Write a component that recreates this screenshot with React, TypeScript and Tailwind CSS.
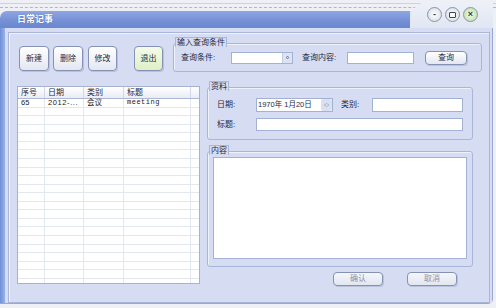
import React from 'react'
import clsx from 'clsx'

const font = { fontFamily: '"Liberation Sans", "Noto Sans CJK SC", sans-serif' }

function Btn({ label, className }: { label: string; className?: string }) {
  return (
    <button
      className={clsx(
        'flex items-center justify-center rounded-[4px] border border-[#8592b4] text-[8px] leading-none text-[#1e2a44] shadow-[1px_1px_0_#b9c2da]',
        className,
      )}
    >
      {label}
    </button>
  )
}

function Group({ legend, className, children }: { legend: string; className?: string; children?: React.ReactNode }) {
  return (
    <div className={clsx('relative rounded-[3px] border border-[#a9b6d7] shadow-[inset_1px_1px_0_#eef2fb]', className)}>
      <span className="absolute -top-[7px] left-[1px] border-x border-t border-[#a9b6d7] bg-[#d6ddf2] px-[1px] text-[8px] leading-[9px] text-[#1e2a44]">
        {legend}
      </span>
      {children}
    </div>
  )
}

function Input({ className }: { className?: string }) {
  return <div className={clsx('border border-[#a3b1d2] bg-white', className)} />
}

const cols = ['w-[27px]', 'w-[39px]', 'w-[40px]', 'w-[67px]', 'flex-1']

function List() {
  const rows = Array.from({ length: 22 })
  return (
    <div className="ml-[8px] mt-[6px] flex h-[198px] w-[183px] flex-col overflow-hidden border border-[#a6b2d0] bg-white">
      <div className="flex h-[12px] shrink-0 border-b border-[#aeb8d4] bg-linear-to-b from-white to-[#e9ecf5] text-[8px] leading-none text-[#1e2a44]">
        {['序号', '日期', '类别', '标题', ''].map((h, i) => (
          <div key={i} className={clsx(cols[i], 'flex items-center pl-[3px]', i < 4 && 'border-r border-[#d2d8e8]')}>
            {h}
          </div>
        ))}
      </div>
      {rows.map((_, r) => (
        <div key={r} className="flex h-[8.57px] shrink-0 border-b border-[#e3e7f0] text-[7.5px] leading-none text-[#222]">
          {(r === 0 ? ['65', '2012-...', '会议', 'meeting', ''] : ['', '', '', '', '']).map((c, i) => (
            <div key={i} className={clsx(cols[i], 'flex items-center pl-[3px]', i < 4 && 'border-r border-[#e3e7f0]', i === 3 && 'font-mono text-[7px] tracking-[0.5px]', i === 1 && 'tracking-[0.6px]')}>
              {c}
            </div>
          ))}
        </div>
      ))}
    </div>
  )
}

function Circle({ children, green }: { children: React.ReactNode; green?: boolean }) {
  return (
    <div
      className={clsx(
        'flex h-[15px] w-[15px] items-center justify-center rounded-full border border-[#8c93a6] text-[9px] font-bold leading-none text-[#333a4c]',
        green ? 'bg-radial from-[#f2fbe8] to-[#b6dca0]' : 'bg-radial from-white to-[#d4d8e2]',
      )}
    >
      {children}
    </div>
  )
}

export default function App() {
  return (
    <div className="relative h-[308px] w-[496px] overflow-hidden bg-[#eef0f5]" style={font}>
      {/* background window behind */}
      <div className="h-[11px]">
        <div className="h-[3px]" />
        <div className="h-px bg-[#cdd2de]" />
        <div className="mt-[3px] h-px border-t border-dashed border-[#8c919c] opacity-60" />
      </div>

      {/* window */}
      <div className="flex h-[293px] w-[493px] flex-col rounded-br-[5px] border-r border-b border-[#99a8cc]">
        <div className="flex h-[17px] shrink-0">
          <div className="flex flex-1 items-center rounded-tl-[7px] bg-linear-to-b from-[#8ea7e2] via-[#7892d6] to-[#6a86cf] pl-[17px] text-[9px] font-bold text-white [text-shadow:0_0_1px_#3a55a0]">
            日常记事
          </div>
          <div className="w-[82px] bg-[#e2e7f3]" />
        </div>
        <div className="flex flex-1">
          <div className="w-[5px] bg-linear-to-r from-[#6f8ed6] to-[#9ab2e8]" />
          <div className="flex-1 bg-[#d6ddf2] pl-[3px] pt-[4px]">
            <div className="flex h-[271px] w-[482px] flex-col border border-[#a9b6d7] shadow-[inset_1px_1px_0_#eef2fb]">
              {/* top row */}
              <div className="flex h-[39px] shrink-0">
                <div className="ml-[10px] mt-[13px] flex">
                  <Btn label="新建" className="h-[25px] w-[30px] bg-linear-to-b from-white to-[#e3e7f1]" />
                  <Btn label="删除" className="ml-[4px] h-[25px] w-[30px] bg-linear-to-b from-white to-[#e3e7f1]" />
                  <Btn label="修改" className="ml-[5px] h-[25px] w-[29px] bg-linear-to-b from-white to-[#e3e7f1]" />
                  <Btn label="退出" className="ml-[17px] h-[25px] w-[29px] bg-linear-to-b from-[#f4fbe9] to-[#dff0c6]" />
                </div>
                <Group legend="输入查询条件" className="ml-[10px] mt-[10px] h-[29px] w-[309px]">
                  <div className="flex h-full items-center pl-[7px] text-[8px] text-[#1e2a44]">
                    <span className="w-[50px]">查询条件:</span>
                    <div className="flex h-[12px] w-[62px] justify-end border border-[#a3b1d2] bg-white">
                      <div className="flex w-[10px] items-center justify-center border-l border-[#c4cce2] bg-[#dde3f3]">
                        <div className="h-[3px] w-[3px] rounded-full border border-[#6a78a8]" />
                      </div>
                    </div>
                    <span className="ml-[9px] w-[45px]">查询内容:</span>
                    <Input className="h-[12px] w-[67px]" />
                    <Btn label="查询" className="ml-[11px] h-[14px] w-[42px] bg-linear-to-b from-white to-[#e3e7f1]" />
                  </div>
                </Group>
              </div>

              {/* bottom row */}
              <div className="mt-[8px] flex">
                <List />
                <div className="ml-[7px] flex w-[266px] flex-col">
                  <Group legend="资料" className="mt-[7px] h-[53px]">
                    <div className="flex flex-col pl-[9px] pt-[10px] text-[8px] text-[#1e2a44]">
                      <div className="flex h-[14px] items-center">
                        <span className="w-[39px]">日期:</span>
                        <div className="flex h-[14px] w-[77px] items-center border border-[#a3b1d2] bg-white pl-[1px] text-[7.5px]">
                          <span className="flex-1">1970年 1月20日</span>
                          <div className="flex h-[12px] w-[11px] flex-col items-center justify-center rounded-[2px] bg-[#d9e0f2] text-[5px] leading-[5px] text-[#4a5470]">
                            <span>︿</span>
                            <span>﹀</span>
                          </div>
                        </div>
                        <span className="ml-[8px] w-[31px]">类别:</span>
                        <Input className="h-[14px] w-[91px]" />
                      </div>
                      <div className="mt-[6px] flex h-[13px] items-center">
                        <span className="w-[39px]">标题:</span>
                        <Input className="h-[13px] w-[207px]" />
                      </div>
                    </div>
                  </Group>
                  <Group legend="内容" className="mt-[11px] h-[116px]">
                    <Input className="ml-[5px] mt-[5px] h-[102px] w-[254px]" />
                  </Group>
                  <div className="mt-[5px] flex">
                    <Btn label="确认" className="ml-[126px] h-[14px] w-[50px] bg-linear-to-b from-[#f4f6fb] to-[#e2e6f0] text-[#8a93a8]" />
                    <Btn label="取消" className="ml-[24px] h-[14px] w-[50px] bg-linear-to-b from-[#f4f6fb] to-[#e2e6f0] text-[#8a93a8]" />
                  </div>
                </div>
              </div>
            </div>
          </div>
        </div>
      </div>

      {/* caption buttons area */}
      <div className="absolute left-[411px] top-[2px] h-[26px] w-[82px] rounded-tl-[16px] bg-linear-to-b from-[#eef1f8] to-[#e0e6f3]" />
      <div className="absolute left-[427px] top-[7px] flex gap-[3px]">
        <Circle>-</Circle>
        <Circle>
          <div className="h-[6px] w-[7px] rounded-[1px] border border-[#3b4356]" />
        </Circle>
        <Circle green>×</Circle>
      </div>
    </div>
  )
}
